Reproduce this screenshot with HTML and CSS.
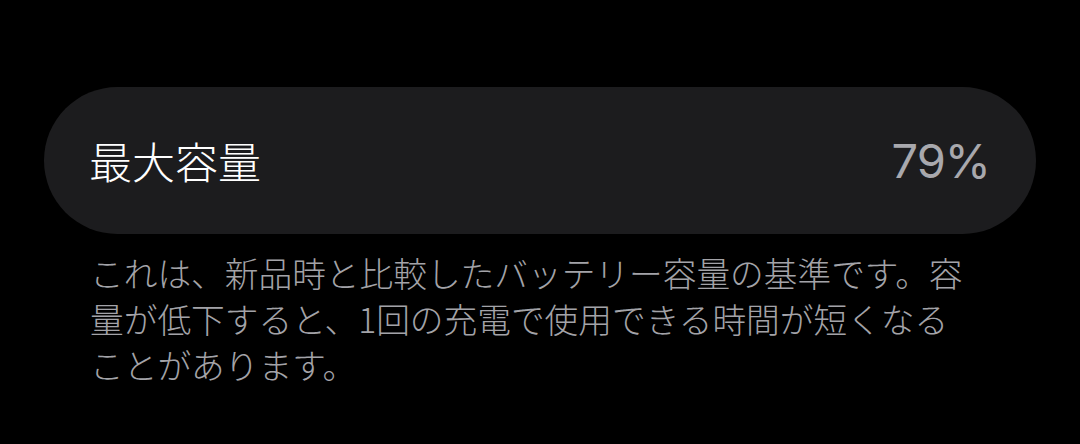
FILE: index.html
```html
<!DOCTYPE html>
<html lang="ja">
<head>
<meta charset="utf-8">
<link rel="stylesheet" href="styles.css">
</head>
<body>
<main class="page">
  <section class="card">
    <span class="label">最大容量</span>
    <span class="value">79%</span>
  </section>
  <p class="footnote">これは、新品時と比較したバッテリー容量の基準です。容量が低下すると、1回の充電で使用できる時間が短くなることがあります。</p>
</main>
</body>
</html>
```

FILE: styles.css
```css
html, body {
  margin: 0;
  padding: 0;
  background: #000;
}
body {
  width: 1080px;
  height: 444px;
  overflow: hidden;
  font-family: "Noto Sans CJK JP", "Noto Sans", sans-serif;
}
.page {
  padding: 87px 44px 0 44px;
}
.card {
  height: 147px;
  border-radius: 74px;
  background: #1c1c1e;
  display: flex;
  align-items: center;
  justify-content: space-between;
  padding: 0 46px 0 45px;
}
.label {
  color: #fff;
  font-size: 43px;
  font-weight: 300;
  line-height: 1;
}
.value {
  color: #a8a8ad;
  font-family: "Inter", "Noto Sans", sans-serif;
  font-size: 47px;
  font-weight: 400;
  letter-spacing: -1px;
  line-height: 1;
}
.footnote {
  margin: 16px 0 0 0;
  padding: 0 0 0 46px;
  width: 886px;
  color: #a3a3a8;
  font-size: 33.7px;
  font-weight: 300;
  line-height: 46px;
}
```
